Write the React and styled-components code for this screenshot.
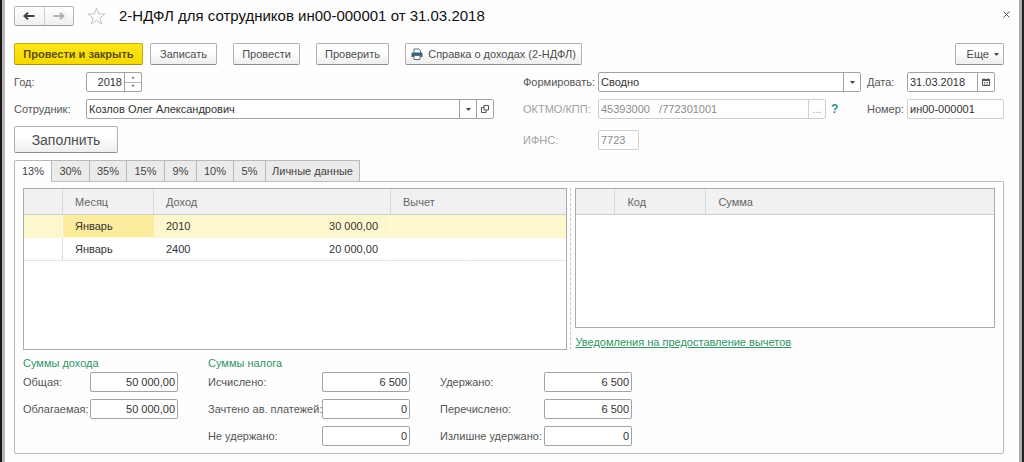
import React, { useState } from 'react'
import styled, { createGlobalStyle } from 'styled-components'

const GlobalStyle = createGlobalStyle`
*{
box-sizing:border-box;
}
body{
margin:0;
background:#fefefe;
}
body, button, input, select{
font-family:"Liberation Sans", Arial, sans-serif;
font-size:11px;
line-height:14px;
color:#444;
}
`

const Window = styled.main`
min-height:100vh;
padding:6px 18px 7px 12px;
border-left:2px solid #1b1718;
border-right:2px solid #1f2222;
box-shadow:inset 3px 0 #b9b5b6, inset -3px 0 #acacac;
`

const TitleBar = styled.header`
display:flex;
align-items:center;
height:20px;
`

const NavGroup = styled.div`
display:flex;
width:60px;
height:20px;
border:1px solid #b5b5b5;
border-bottom-color:#9a9a9a;
border-radius:2px;
background:linear-gradient(#fff, #f0f0f0);
`

const NavButton = styled.button`
flex:1;
display:flex;
align-items:center;
justify-content:center;
padding:0;
border:0;
border-left:${p => p.$divided ? '1px solid #d0d0d0' : '0'};
background:none;
color:${p => p.$dim ? '#b0b0b0' : '#444'};
`

const PlainButton = styled.button`
display:flex;
padding:0;
border:0;
background:none;
color:#c4c4c4;
`

const StarButton = styled(PlainButton)`
margin:0 13px;
`

const CloseButton = styled(PlainButton)`
align-self:flex-start;
margin:5px -6px 0 auto;
color:#555;
`

const Title = styled.h1`
margin:0;
font-size:15px;
line-height:20px;
font-weight:400;
color:#111;
`

const CommandBar = styled.div`
display:flex;
gap:16px;
margin-top:17px;
`

const ButtonPair = styled.div`
display:flex;
gap:7px;
`

const Command = styled.button`
display:flex;
align-items:center;
justify-content:center;
gap:5px;
height:${p => p.$large ? '27px' : '22px'};
min-width:${p => p.$width || '67px'};
padding:0 4px;
white-space:nowrap;
font-size:${p => p.$large ? '14px' : '11px'};
font-weight:${p => p.$main ? '700' : '400'};
color:${p => p.$main ? '#5b4f10' : '#4d4d4d'};
border:1px solid ${p => p.$main ? '#c9ac0e' : '#b0b0b0'};
border-bottom-color:${p => p.$main ? '#a58d10' : '#8c8c8c'};
border-radius:2px;
background:${p => p.$main ? 'linear-gradient(#ffe618, #f5d800)' : 'linear-gradient(#fff 40%, #eee)'};
`

const MoreButton = styled(Command)`
margin-left:auto;
justify-content:flex-end;
`

const Form = styled.div`
display:grid;
grid-template-columns:72px minmax(0, 408fr) 29px 75px minmax(0, 263fr) 6px 40px 97px;
grid-template-rows:20px 20px 27px;
row-gap:7px;
align-items:center;
margin-top:7px;
`

const Label = styled.label`
grid-column:${p => p.$col};
white-space:nowrap;
color:${p => p.$dim ? '#a0a0a0' : '#555'};
`

const Field = styled.div`
display:flex;
grid-column:${p => p.$col};
width:${p => p.$width || 'auto'};
height:20px;
overflow:hidden;
border:1px solid ${p => p.$dim ? '#cfcfcf' : '#a3a3a3'};
border-radius:2px;
background:#fff;
`

const Input = styled.input`
flex:1;
min-width:0;
padding:0 2px;
border:0;
outline:0;
background:none;
text-align:${p => p.$right ? 'right' : 'left'};
color:${p => p.$dim ? '#8c8c8c' : '#333'};
appearance:textfield;
&::-webkit-inner-spin-button{
appearance:none;
margin:0;
}
`

const SelectBox = styled.div`
flex:1;
display:grid;
grid-template-columns:minmax(0, 1fr) 17px;
`

const Select = styled.select`
grid-area:1 / 1 / 2 / 3;
padding:0 2px;
border:0;
outline:0;
background:none;
color:#333;
appearance:none;
`

const SelectArrow = styled.span`
grid-area:1 / 2;
display:flex;
align-items:center;
justify-content:center;
border-left:1px solid #a3a3a3;
pointer-events:none;
`

const FieldButton = styled.button`
display:flex;
align-items:center;
justify-content:center;
width:17px;
padding:0;
border:0;
border-left:1px solid ${p => p.$dim ? '#cfcfcf' : '#a3a3a3'};
background:none;
color:${p => p.$dim ? '#999' : '#444'};
`

const Spinner = styled.div`
display:flex;
flex-direction:column;
width:17px;
border-left:1px solid #a3a3a3;
`

const SpinButton = styled.button`
flex:1;
display:flex;
align-items:center;
justify-content:center;
padding:0;
border:0;
border-bottom:${p => p.$top ? '1px solid #b8b8b8' : '0'};
background:none;
`

const HelpRow = styled.div`
display:flex;
align-items:center;
gap:5px;
grid-column:5;
`

const HelpField = styled(Field)`
flex:1;
`

const HelpButton = styled(PlainButton)`
width:30px;
color:#2b9484;
font-size:12px;
font-weight:700;
`

const FillCell = styled.div`
grid-column:1 / 3;
`

const Tabs = styled.div`
display:flex;
margin-top:7px;
`

const Tab = styled.button`
width:${p => p.$width};
height:${p => p.$active ? '22px' : '21px'};
margin-bottom:${p => p.$active ? '-1px' : '0'};
padding:0 0 1px;
border:1px solid #b9b9b9;
border-left-width:${p => p.$active ? '1px' : '0'};
border-bottom:0;
border-radius:${p => p.$active ? '2px 0 0 0' : '0'};
background:${p => p.$active ? '#fefefe' : '#ebebeb'};
z-index:1;
`

const Panel = styled.section`
padding:6px 8px 7px;
border:1px solid #bcbcbc;
border-radius:0 0 2px 2px;
`

const Split = styled.div`
display:grid;
grid-template-columns:minmax(0, 545fr) 8px minmax(0, 420fr);
`

const Divider = styled.div`
width:4px;
border-right:1px dashed #c8c8c8;
`

const TableBox = styled.div`
height:${p => p.$height};
border:1px solid #aaa;
background:#fff;
`

const Table = styled.table`
width:100%;
table-layout:fixed;
border-collapse:separate;
border-spacing:0;
`

const Col = styled.col`
width:${p => p.$width || 'auto'};
`

const Th = styled.th`
height:26px;
padding:0 12px;
text-align:left;
font-weight:400;
color:#666;
background:#f1f1f1;
border-bottom:1px solid #cfcfcf;
border-right:1px solid #d8d8d8;
&:last-child{
border-right:0;
}
`

const Td = styled.td`
height:23px;
padding:0 12px;
white-space:nowrap;
text-align:${p => p.$right ? 'right' : 'left'};
color:#333;
background:${p => p.$current ? '#fbed9d' : p.$selected ? '#fdf7ce' : '#fff'};
border-bottom:1px solid ${p => p.$selected ? '#fbf5d8' : '#e4e4e4'};
border-right:${p => p.$line ? `1px solid ${p.$selected ? '#fffbe4' : p.$line}` : '0'};
`

const NoticeLink = styled.a`
display:block;
width:fit-content;
margin-top:7px;
color:#2f9363;
`

const Sums = styled.div`
display:grid;
grid-template-columns:67px 88px 30px 114px 88px 30px 104px 88px;
grid-template-rows:9px repeat(3, 20px);
align-items:center;
row-gap:7px;
margin-top:6px;
`

const SumHeading = styled.h2`
grid-row:1;
grid-column:${p => p.$col};
align-self:start;
margin:0;
font-size:11px;
line-height:14px;
font-weight:400;
white-space:nowrap;
color:#2f9363;
`

const SumLabel = styled(Label)`
grid-row:${p => p.$row};
`

const SumField = styled(Field)`
grid-row:${p => p.$row};
`

const Caret = () => (
  <svg width="5" height="3" viewBox="0 0 5 3"><path d="M0 0h5L2.5 3z" fill="#444" /></svg>
)

const SpinMark = ({ down }) => (
  <svg width="4" height="3" viewBox="0 0 4 3"><path d={down ? 'M.5 0h3L2 2z' : 'M.5 2.5h3L2 .5z'} fill="#555" /></svg>
)

const Arrow = ({ right }) => (
  <svg width="12" height="8" viewBox="0 0 12 8" fill="none" stroke="currentColor" strokeWidth="2">
    <path d={right ? 'M0.5 4h10M7 0.7L10.5 4L7 7.3' : 'M11.5 4h-10M5 0.7L1.5 4L5 7.3'} />
  </svg>
)

const Star = () => (
  <svg width="19" height="18" viewBox="0 0 19 18" fill="none" stroke="currentColor">
    <path d="M9.5 1l2.1 6h6.4l-5.1 3.8 1.9 6.2-5.3-3.8L4.2 17l1.9-6.2L1 7h6.4z" />
  </svg>
)

const Cross = () => (
  <svg width="7" height="7" viewBox="0 0 7 7" stroke="currentColor"><path d="M.5.5l6 6M6.5.5l-6 6" /></svg>
)

const Printer = () => (
  <svg width="12" height="12" viewBox="0 0 12 12">
    <path d="M3 5V1h5l1.5 1.5V5" fill="#fff" stroke="#557487" />
    <path d="M1.5 4.5h9a1 1 0 0 1 1 1V9h-11V5.5a1 1 0 0 1 1-1z" fill="#3c6178" />
    <path d="M3 7.5h6v4H3z" fill="#fff" stroke="#557487" />
  </svg>
)

const OpenIcon = () => (
  <svg width="8" height="8" viewBox="0 0 8 8" fill="none" stroke="#555">
    <path d="M3 .5h4.500v4.500H3zM3 2.500H.5v5H5V5" />
  </svg>
)

const CalendarIcon = () => (
  <svg width="8" height="8" viewBox="0 0 8 8">
    <path d="M.5 1.5h7v6h-7z" fill="#fff" stroke="#555" />
    <path d="M0 1h8v2H0zM1.5 0h1v1h-1zM5.5 0h1v1h-1z" fill="#555" />
    <path d="M2 4h1v1H2zM3.5 4h1v1h-1zM5 4h1v1H5zM2 5.7h1v1H2zM3.5 5.7h1v1h-1zM5 5.7h1v1H5z" fill="#666" />
  </svg>
)

const tabs = [
  { name: '13%', width: '38px' },
  { name: '30%', width: '38px' },
  { name: '35%', width: '37px' },
  { name: '15%', width: '38px' },
  { name: '9%', width: '32px' },
  { name: '10%', width: '37px' },
  { name: '5%', width: '32px' },
  { name: 'Личные данные', width: '94px' },
]

const incomes = [
  { month: 'Январь', code: '2010', amount: '30 000,00' },
  { month: 'Январь', code: '2400', amount: '20 000,00' },
]

const sums = [
  { id: 'total', label: 'Общая:', value: '50 000,00', col: 1, row: 2 },
  { id: 'taxable', label: 'Облагаемая:', value: '50 000,00', col: 1, row: 3 },
  { id: 'calculated', label: 'Исчислено:', value: '6 500', col: 4, row: 2 },
  { id: 'advance', label: 'Зачтено ав. платежей:', value: '0', col: 4, row: 3 },
  { id: 'notWithheld', label: 'Не удержано:', value: '0', col: 4, row: 4 },
  { id: 'withheld', label: 'Удержано:', value: '6 500', col: 7, row: 2 },
  { id: 'transferred', label: 'Перечислено:', value: '6 500', col: 7, row: 3 },
  { id: 'excess', label: 'Излишне удержано:', value: '0', col: 7, row: 4 },
]

function App() {
  const [year, setYear] = useState(2018)
  const [activeTab, setActiveTab] = useState('13%')
  const [selected, setSelected] = useState(0)

  return (
    <>
      <GlobalStyle />
      <Window>
        <TitleBar>
          <NavGroup>
            <NavButton aria-label="Назад"><Arrow /></NavButton>
            <NavButton $divided $dim aria-label="Вперед"><Arrow right /></NavButton>
          </NavGroup>
          <StarButton aria-label="В избранное"><Star /></StarButton>
          <Title>2-НДФЛ для сотрудников ин00-000001 от 31.03.2018</Title>
          <CloseButton aria-label="Закрыть"><Cross /></CloseButton>
        </TitleBar>

        <CommandBar>
          <ButtonPair>
            <Command $main $width="129px">Провести и закрыть</Command>
            <Command>Записать</Command>
          </ButtonPair>
          <Command>Провести</Command>
          <Command $width="73px">Проверить</Command>
          <Command $width="177px"><Printer />Справка о доходах (2-НДФЛ)</Command>
          <MoreButton $width="49px">Еще <Caret /></MoreButton>
        </CommandBar>

        <Form>
          <Label $col="1" htmlFor="year">Год:</Label>
          <Field $col="2" $width="56px">
            <Input id="year" type="number" $right value={year} onChange={e => setYear(Number(e.target.value))} />
            <Spinner>
              <SpinButton $top aria-label="Больше" onClick={() => setYear(year + 1)}><SpinMark /></SpinButton>
              <SpinButton aria-label="Меньше" onClick={() => setYear(year - 1)}><SpinMark down /></SpinButton>
            </Spinner>
          </Field>
          <Label $col="4" htmlFor="mode">Формировать:</Label>
          <Field $col="5">
            <SelectBox>
              <Select id="mode" defaultValue="Сводно">
                <option>Сводно</option>
              </Select>
              <SelectArrow><Caret /></SelectArrow>
            </SelectBox>
          </Field>
          <Label $col="7" htmlFor="date">Дата:</Label>
          <Field $col="8" $width="88px">
            <Input id="date" type="text" defaultValue="31.03.2018" />
            <FieldButton aria-label="Выбрать дату"><CalendarIcon /></FieldButton>
          </Field>

          <Label $col="1" htmlFor="employee">Сотрудник:</Label>
          <Field $col="2">
            <Input id="employee" type="text" defaultValue="Козлов Олег Александрович" />
            <FieldButton aria-label="Выбрать сотрудника"><Caret /></FieldButton>
            <FieldButton aria-label="Открыть сотрудника"><OpenIcon /></FieldButton>
          </Field>
          <Label $col="4" $dim htmlFor="oktmo">ОКТМО/КПП:</Label>
          <HelpRow>
            <HelpField $dim>
              <Input id="oktmo" type="text" $dim disabled defaultValue="45393000   /772301001" />
              <FieldButton $dim disabled>...</FieldButton>
            </HelpField>
            <HelpButton>?</HelpButton>
          </HelpRow>
          <Label $col="7" htmlFor="number">Номер:</Label>
          <Field $col="8" $dim>
            <Input id="number" type="text" defaultValue="ин00-000001" />
          </Field>

          <FillCell>
            <Command $large $width="104px">Заполнить</Command>
          </FillCell>
          <Label $col="4" $dim htmlFor="ifns">ИФНС:</Label>
          <Field $col="5" $dim $width="41px">
            <Input id="ifns" type="text" $dim disabled defaultValue="7723" />
          </Field>
        </Form>

        <Tabs role="tablist">
          {tabs.map(tab => (
            <Tab
              key={tab.name}
              role="tab"
              aria-selected={tab.name === activeTab}
              $active={tab.name === activeTab}
              $width={tab.width}
              onClick={() => setActiveTab(tab.name)}
            >
              {tab.name}
            </Tab>
          ))}
        </Tabs>

        <Panel>
          <Split>
            <TableBox $height="162px">
              <Table>
                <colgroup>
                  <Col $width="39px" />
                  <Col $width="91px" />
                  <Col $width="76px" />
                  <Col $width="161px" />
                  <Col $width="76px" />
                  <Col />
                </colgroup>
                <thead>
                  <tr>
                    <Th />
                    <Th>Месяц</Th>
                    <Th colSpan={2}>Доход</Th>
                    <Th colSpan={2}>Вычет</Th>
                  </tr>
                </thead>
                <tbody>
                  {incomes.map((row, i) => {
                    const on = i === selected
                    return (
                      <tr key={row.code} onClick={() => setSelected(i)}>
                        <Td $selected={on} $line="#dcdcdc" />
                        <Td $selected={on} $current={on}>{row.month}</Td>
                        <Td $selected={on}>{row.code}</Td>
                        <Td $selected={on} $right $line="#fff">{row.amount}</Td>
                        <Td $selected={on} $line="#fff" />
                        <Td $selected={on} />
                      </tr>
                    )
                  })}
                </tbody>
              </Table>
            </TableBox>
            <Divider />
            <div>
              <TableBox $height="140px">
                <Table>
                  <colgroup>
                    <Col $width="39px" />
                    <Col $width="91px" />
                    <Col />
                  </colgroup>
                  <thead>
                    <tr>
                      <Th />
                      <Th>Код</Th>
                      <Th>Сумма</Th>
                    </tr>
                  </thead>
                </Table>
              </TableBox>
              <NoticeLink href="#notices">Уведомления на предоставление вычетов</NoticeLink>
            </div>
          </Split>

          <Sums>
            <SumHeading $col="1 / 3">Суммы дохода</SumHeading>
            <SumHeading $col="4 / 6">Суммы налога</SumHeading>
            {sums.map(sum => (
              <React.Fragment key={sum.id}>
                <SumLabel $col={sum.col} $row={sum.row} htmlFor={sum.id}>{sum.label}</SumLabel>
                <SumField $col={sum.col + 1} $row={sum.row}>
                  <Input id={sum.id} type="text" $right defaultValue={sum.value} />
                </SumField>
              </React.Fragment>
            ))}
          </Sums>
        </Panel>
      </Window>
    </>
  )
}

export default App
